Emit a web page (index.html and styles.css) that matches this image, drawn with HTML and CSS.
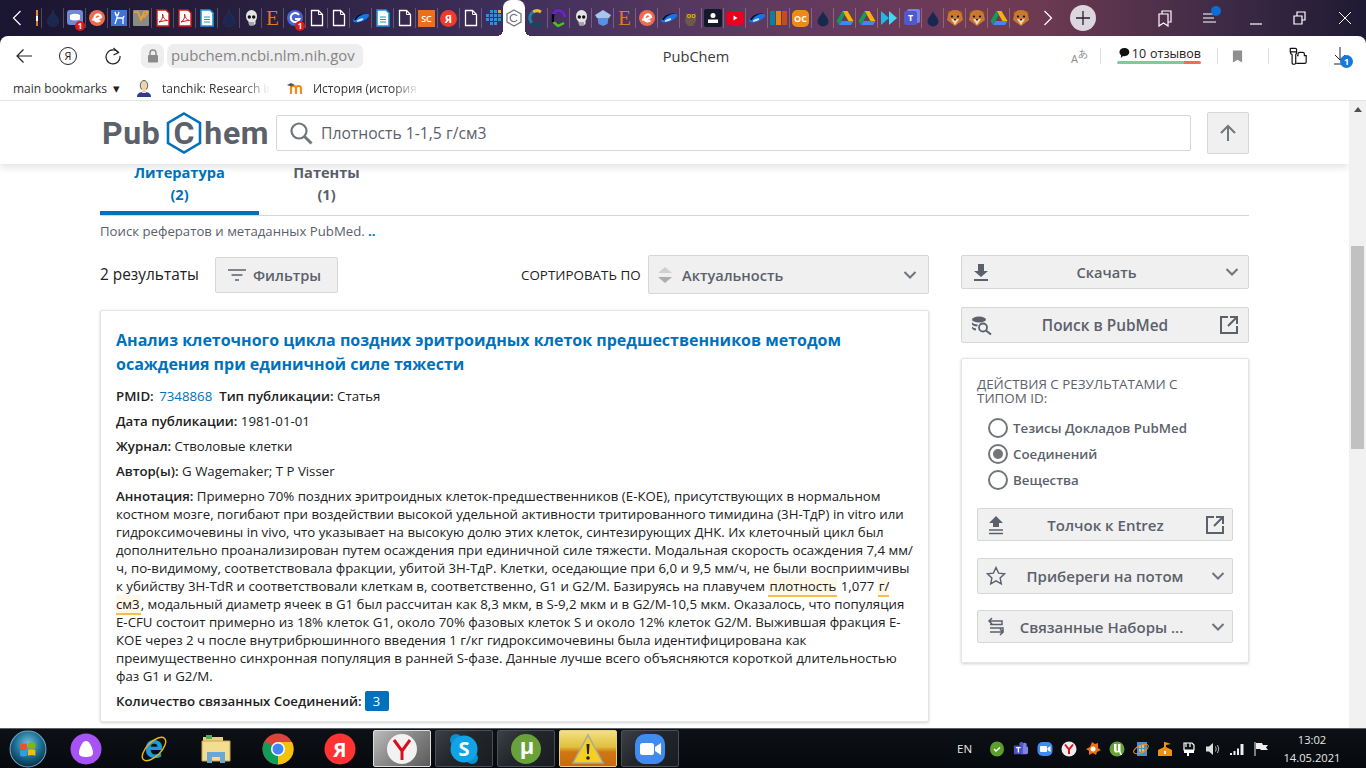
FILE: index.html
```html
<!DOCTYPE html>
<html lang="ru">
<head>
<meta charset="utf-8">
<title>PubChem</title>
<link rel="stylesheet" href="styles.css">
</head>
<body>
<svg class="defs" aria-hidden="true">
  <defs>
    <radialGradient id="orbg" cx="50%" cy="35%" r="65%"><stop offset="0" stop-color="#6fc0dc"/><stop offset=".55" stop-color="#1d6f96"/><stop offset="1" stop-color="#0b2c44"/></radialGradient>
  </defs>
  <symbol id="drop" viewBox="0 0 18 18"><path d="M9 1.500c.3 3-5.500 6.500-5.500 11a5.500 5 0 0 0 11 0c0-4.500-5.800-8-5.500-11z" fill="#1a2850" stroke="#2c4a80" stroke-width=".6" stroke-dasharray="1 1"/></symbol>
  <symbol id="discord" viewBox="0 0 18 18"><rect x="1" y="1" width="16" height="15" rx="3" fill="#6f88d8"/><path d="M4 6q5-2.500 10 0v4.500q-5 2-10 0z" fill="#fff"/></symbol>
  <symbol id="eicon" viewBox="0 0 18 18"><circle cx="9" cy="9" r="8" fill="#ee6b50"/><path d="M4 10.500q5 .5 9-2.500q-1-3-4-2.500q-3 1-2.500 5q1 3 6 1" fill="none" stroke="#fff" stroke-width="2.200"/></symbol>
  <symbol id="deer" viewBox="0 0 18 18"><rect x="1" y="1" width="16" height="16" fill="#3f74d9"/><path d="M5 3l1 3h2l1-3M7 6v3l-2 6M7 9h6v6M13 9l1-2" fill="none" stroke="#fff" stroke-width="1.300"/></symbol>
  <symbol id="vlogo" viewBox="0 0 18 18"><rect x="1" y="1" width="16" height="16" rx="1" fill="#8b8b85"/><path d="M2 3h4l3 8 3-8h4l-2 3h-3M9 8h5" fill="none" stroke="#f0a030" stroke-width="1.500"/></symbol>
  <symbol id="pdf" viewBox="0 0 18 18"><path d="M3 1h9l3 3v13H3z" fill="#fff" stroke="#d01818" stroke-width="1.400"/><path d="M5 13c3-1 4-5 3.500-8 1 4 2 6 5 6.500-3 0-6 1-8.500 1.500z" fill="none" stroke="#d01818"/></symbol>
  <symbol id="gdoc" viewBox="0 0 18 18"><path d="M3 1h9l3 3v13H3z" fill="#fff" stroke="#1a96d6" stroke-width="1.600"/><path d="M6 8h6M6 10.500h6M6 13h6" stroke="#1a96d6"/></symbol>
  <symbol id="skull" viewBox="0 0 18 18"><path d="M4 7a5.500 6 0 0 1 11 0c0 3-1 4-1.500 5v3l-2 1.500h-4l-1-2v-2c-1.500-1-2.500-3-2.500-5.500z" fill="#e4e4e4"/><circle cx="7.300" cy="8" r="1.700" fill="#111"/><circle cx="11.700" cy="8" r="1.700" fill="#111"/><path d="M7 13v3M9 13v3M11 13v3" stroke="#333" stroke-width=".7"/></symbol>
  <symbol id="gicon" viewBox="0 0 18 18"><circle cx="9" cy="9" r="8" fill="#4a63d8"/><path d="M13 6a4.500 4.500 0 1 0 .5 4H9" fill="none" stroke="#fff" stroke-width="2"/></symbol>
  <symbol id="file" viewBox="0 0 18 18"><path d="M3.500 1.500h7l4 4v11h-11z" fill="none" stroke="#fff" stroke-width="1.300"/><path d="M10.500 1.500v4h4" fill="none" stroke="#fff"/></symbol>
  <symbol id="saucer" viewBox="0 0 18 18"><ellipse cx="9" cy="9" rx="8.500" ry="3.500" transform="rotate(-22 9 9)" fill="#1474e8"/><path d="M2 11c2-5 8-7 14-7-5 1-10 3-12 7z" fill="#0a0a12"/><ellipse cx="8" cy="11" rx="3.500" ry="1.200" transform="rotate(-22 8 11)" fill="#cfe6ff"/></symbol>
  <symbol id="cubes" viewBox="0 0 18 18"><g fill="#2f8fd8"><rect x="6" y="1" width="3" height="3"/><rect x="10" y="1" width="3" height="3"/><rect x="2" y="5" width="3" height="3"/><rect x="6" y="5" width="3" height="3"/><rect x="10" y="5" width="3" height="3"/><rect x="14" y="5" width="3" height="3"/><rect x="2" y="9" width="3" height="3"/><rect x="6" y="9" width="3" height="3"/><rect x="10" y="9" width="3" height="3"/><rect x="14" y="9" width="3" height="3"/><rect x="6" y="13" width="3" height="3"/><rect x="10" y="13" width="3" height="3"/></g><rect x="14" y="1" width="3" height="3" fill="#e8b020"/></symbol>
  <symbol id="cactive" viewBox="0 0 18 18"><path d="M9 1l7 4v8l-7 4-7-4V5z" fill="none" stroke="#77797e" stroke-width="1.300"/><path d="M12 7a3.700 3.700 0 1 0 0 4" fill="none" stroke="#77797e" stroke-width="1.300"/></symbol>
  <symbol id="crainbow" viewBox="0 0 18 18"><path d="M14 3a7 7 0 0 0-8 0" fill="none" stroke="#e0c030" stroke-width="3"/><path d="M6 3a7 7 0 0 0-1 11" fill="none" stroke="#1b7fa8" stroke-width="3"/><path d="M5 14a7 7 0 0 0 9 1" fill="none" stroke="#0c4a60" stroke-width="3"/></symbol>
  <symbol id="clar" viewBox="0 0 18 18"><path d="M13 3L7 1 3 5l.5 8" fill="none" stroke="#7020d8" stroke-width="2.500"/><path d="M3.500 13L8 17l6-3" fill="none" stroke="#50c020" stroke-width="2.500"/><path d="M3 5v8" stroke="#000" stroke-width="2.500"/><path d="M13 3l2 5" stroke="#7020d8" stroke-width="2.500"/></symbol>
  <symbol id="shield" viewBox="0 0 18 18"><path d="M9 1l8 5-2 3H3L1 6z" fill="#a6c6f0"/><path d="M3.500 9h11l-1 6-4.500 2-4.500-2z" fill="#5b8fe0"/></symbol>
  <symbol id="owl" viewBox="0 0 18 18"><path d="M4 4l2 1h6l2-1v8l-3 5H6l-3-4z" fill="#6b5a4a"/><circle cx="7" cy="7" r="2" fill="#e8b020"/><circle cx="11.500" cy="7" r="2" fill="#e8b020"/><circle cx="7" cy="7" r=".8" fill="#111"/><circle cx="11.500" cy="7" r=".8" fill="#111"/></symbol>
  <symbol id="prof" viewBox="0 0 18 18"><rect width="18" height="18" rx="2" fill="#13182a"/><circle cx="9" cy="6.500" r="2.500" fill="#fff"/><rect x="4" y="10.500" width="10" height="3.500" fill="#fff"/></symbol>
  <symbol id="yt" viewBox="0 0 18 18"><rect y="2" width="18" height="14" rx="3" fill="#e8001c"/><path d="M7.500 6.500v5l4-2.500z" fill="#fff"/></symbol>
  <symbol id="bars" viewBox="0 0 18 18"><rect y="2" width="5" height="14" fill="#0a7f9e"/><rect x="6" y="2" width="5" height="14" fill="#e8820a"/><rect x="12" y="2" width="5" height="14" fill="#c84a20"/></symbol>
  <symbol id="drive" viewBox="0 0 18 18"><path d="M6.500 2h5l6 10H12.500z" fill="#f4b400"/><path d="M6.500 2L0.500 12l2.500 4 6-10.500z" fill="#0f9d58"/><path d="M3 16h12l2.500-4H5.500z" fill="#4285f4"/></symbol>
  <symbol id="arrows" viewBox="0 0 18 18"><path d="M1 2l8 7-8 7z" fill="#20b8e8"/><path d="M9 2l8 7-8 7z" fill="#40d8f0"/></symbol>
  <symbol id="bear" viewBox="0 0 18 18"><circle cx="3.500" cy="4" r="2.500" fill="#8a4a20"/><circle cx="14.500" cy="4" r="2.500" fill="#8a4a20"/><path d="M2 6a7 5 0 0 1 14 0l1 5-8 6-8-6z" fill="#c87830"/><path d="M5 10h8l-4 6z" fill="#f2d8b0"/><circle cx="6" cy="7.500" r="1.100" fill="#111"/><circle cx="12" cy="7.500" r="1.100" fill="#111"/><path d="M7.500 10h3L9 12z" fill="#111"/></symbol>
  <symbol id="chev" viewBox="0 0 14 10"><path d="M1.500 2L7 7.500 12.500 2" fill="none" stroke="#6f747c" stroke-width="2"/></symbol>
  <symbol id="ext" viewBox="0 0 20 20"><path d="M9 2H2v16h16v-7M11 2h7v7M18 2l-9 9" fill="none" stroke="#5b616b" stroke-width="2"/></symbol>
</svg>

<div class="screen">
  <header class="chrome">
    <div class="strip">
      <div class="arrow-slot"><svg class="nav-arrow" viewBox="0 0 10 18"><path d="M8.500 2L1.500 9l7 7" fill="none" stroke="#fff" stroke-width="1.200"/></svg></div>
      <div class="part-slot"><span class="part-tab"></span></div>
      <div class="tab"><svg class="ic"><use href="#drop"/></svg></div>
      <div class="tab"><svg class="ic"><use href="#discord"/></svg><span class="tab-badge">1</span></div>
      <div class="tab"><svg class="ic"><use href="#eicon"/></svg></div>
      <div class="tab"><svg class="ic"><use href="#deer"/></svg></div>
      <div class="tab"><svg class="ic"><use href="#vlogo"/></svg></div>
      <div class="tab"><svg class="ic"><use href="#pdf"/></svg></div>
      <div class="tab"><svg class="ic"><use href="#pdf"/></svg></div>
      <div class="tab"><svg class="ic"><use href="#gdoc"/></svg></div>
      <div class="tab"><svg class="ic"><use href="#drop"/></svg></div>
      <div class="tab"><svg class="ic"><use href="#skull"/></svg></div>
      <div class="tab"><span class="fav-e">E</span></div>
      <div class="tab"><svg class="ic"><use href="#gicon"/></svg><span class="tab-badge">1</span></div>
      <div class="tab"><svg class="ic"><use href="#file"/></svg></div>
      <div class="tab"><svg class="ic"><use href="#file"/></svg></div>
      <div class="tab"><svg class="ic"><use href="#saucer"/></svg></div>
      <div class="tab"><svg class="ic"><use href="#gdoc"/></svg></div>
      <div class="tab"><svg class="ic"><use href="#file"/></svg></div>
      <div class="tab"><span class="fav-sc">SC</span></div>
      <div class="tab"><span class="fav-ya">Я</span></div>
      <div class="tab"><svg class="ic"><use href="#file"/></svg></div>
      <div class="tab"><svg class="ic"><use href="#cubes"/></svg></div>
      <div class="tab-active"><svg class="ic"><use href="#cactive"/></svg></div>
      <div class="tab tab-first"><svg class="ic"><use href="#crainbow"/></svg></div>
      <div class="tab"><svg class="ic"><use href="#clar"/></svg></div>
      <div class="tab"><svg class="ic"><use href="#skull"/></svg></div>
      <div class="tab"><svg class="ic"><use href="#shield"/></svg></div>
      <div class="tab"><span class="fav-e">E</span></div>
      <div class="tab"><svg class="ic"><use href="#eicon"/></svg></div>
      <div class="tab"><svg class="ic"><use href="#saucer"/></svg></div>
      <div class="tab"><svg class="ic"><use href="#owl"/></svg></div>
      <div class="tab"><svg class="ic"><use href="#prof"/></svg></div>
      <div class="tab"><svg class="ic"><use href="#yt"/></svg></div>
      <div class="tab"><svg class="ic"><use href="#saucer"/></svg></div>
      <div class="tab"><svg class="ic"><use href="#bars"/></svg></div>
      <div class="tab"><span class="fav-oc">OC</span></div>
      <div class="tab"><svg class="ic"><use href="#drop"/></svg></div>
      <div class="tab"><svg class="ic"><use href="#drive"/></svg></div>
      <div class="tab"><svg class="ic"><use href="#drive"/></svg></div>
      <div class="tab"><svg class="ic"><use href="#arrows"/></svg></div>
      <div class="tab"><span class="fav-teams">T</span></div>
      <div class="tab"><svg class="ic"><use href="#drop"/></svg></div>
      <div class="tab"><svg class="ic"><use href="#bear"/></svg></div>
      <div class="tab"><svg class="ic"><use href="#bear"/></svg></div>
      <div class="tab"><svg class="ic"><use href="#drive"/></svg></div>
      <div class="tab"><svg class="ic"><use href="#bear"/></svg></div>
      <div class="more-slot"><svg class="nav-arrow" viewBox="0 0 10 18"><path d="M1.500 2l7 7-7 7" fill="none" stroke="#fff" stroke-width="1.200"/></svg></div>
      <div class="plus"><svg viewBox="0 0 14 14" class="plus-ic"><path d="M7 0v14M0 7h14" stroke="#222" stroke-width="1.300"/></svg></div>
      <div class="win-ctl">
        <svg class="wc wc-coll" viewBox="0 0 18 18"><path d="M3 5h9v12l-4.500-3L3 17z M6 5V2h9v11h-3" fill="none" stroke="#fff" stroke-width="1.200"/></svg>
        <span class="wc-menu"><svg class="wc" viewBox="0 0 18 18"><path d="M0 5h11M0 9h11M0 13h13" stroke="#fff" stroke-width="1.200"/></svg><span class="wc-dot"></span></span>
        <svg class="wc wc-min" viewBox="0 0 18 18"><path d="M3 15h12" stroke="#fff" stroke-width="1.200"/></svg>
        <svg class="wc wc-max" viewBox="0 0 18 18"><path d="M3 7h8v8H3z M6 7V3h8v8h-3" fill="none" stroke="#fff" stroke-width="1.200"/></svg>
        <svg class="wc wc-close" viewBox="0 0 18 18"><path d="M3 3l12 12M15 3L3 15" stroke="#fff" stroke-width="1"/></svg>
      </div>
    </div>
    <div class="toolbar">
      <div class="tb-left">
        <svg class="tb-back" viewBox="0 0 18 16"><path d="M17 8H2M8.500 1.500L2 8l6.500 6.500" fill="none" stroke="#222" stroke-width="1.200"/></svg>
        <span class="tb-ya">Я</span>
        <svg class="tb-reload" viewBox="0 0 18 18"><path d="M14.500 5.500A7 7 0 1 0 16 9" fill="none" stroke="#222" stroke-width="1.200"/><path d="M9.500 1l5 4.500-5 2.500" fill="none" stroke="#222" stroke-width="1.200"/></svg>
        <span class="lock-pill"><svg class="lock" viewBox="0 0 12 14"><path d="M3 6V4a3 3 0 0 1 6 0v2" fill="none" stroke="#8a8a8a" stroke-width="1.400"/><rect x="1" y="6" width="10" height="7.500" rx="1" fill="#8a8a8a"/></svg></span>
        <span class="url-pill">pubchem.ncbi.nlm.nih.gov</span>
      </div>
      <div class="tb-title">PubChem</div>
      <div class="tb-right">
        <span class="translate">A<span class="translate-jp">あ</span></span>
        <span class="tb-sep tb-sep-a"></span>
        <div class="reviews">
          <div class="rev-text"><svg class="rev-ic" viewBox="0 0 12 12"><path d="M6 .5c3 0 5.500 1.800 5.500 4.500S9 9.500 6 9.500c-.6 0-1 0-1.500-.2L2 11.500l.3-3C1 7.500.5 6.300.5 5 .5 2.300 3 .5 6 .5z" fill="#111"/></svg>10 <span class="rev-small">отзывов</span></div>
          <div class="rev-bar"><span class="rev-good"></span><span class="rev-bad"></span></div>
        </div>
        <span class="tb-sep tb-sep-b"></span>
        <svg class="tb-mark" viewBox="0 0 12 14"><path d="M1 1h10v13L6 11 1 14z" fill="#8f8f8f"/></svg>
        <span class="tb-sep tb-sep-c"></span>
        <svg class="tb-prot" viewBox="0 0 22 20"><path d="M3 1h5q1.500 0 1.500 1.500V5q0 1.500-1 3v9q0 1.500-1.500 1.500h-1Q4.500 18.500 4.500 17V8q-2-1.500-2-3V2Q2 1 3 1zM2.500 5h7" fill="none" stroke="#111" stroke-width="1.300"/><path d="M10 9h1V7q0-1.500 2-1.500h3q2 0 2 1.500v2h2v7q0 1.500-1.500 1.500H9" fill="none" stroke="#111" stroke-width="1.300"/></svg>
        <span class="tb-dl"><svg class="tb-dl-ic" viewBox="0 0 14 18"><path d="M6 0v13M1 8l5 5 5-5M0 17h11" fill="none" stroke="#222" stroke-width="1"/></svg><span class="tb-dl-badge">1</span></span>
      </div>
    </div>
    <div class="bookmarks">
      <span class="bm bm-main">main bookmarks <span class="bm-caret">▾</span></span>
      <svg class="bm-ava" viewBox="0 0 16 18"><path d="M1 18c0-4 3-5 7-5s7 1 7 5z" fill="#2c3a90"/><ellipse cx="8" cy="6.500" rx="3.700" ry="5" fill="#f0d4b0" stroke="#333" stroke-width=".8"/><rect x="6" y="10" width="4" height="4" fill="#f0d4b0"/></svg>
      <span class="bm bm-fade bm-one">tanchik: Research in</span>
      <svg class="bm-moodle" viewBox="0 0 18 14"><path d="M4 13V7q0-2 2.500-2T9 7v6M9 7q0-2 2.500-2T14 7v6" fill="none" stroke="#f58a1f" stroke-width="2.200"/><path d="M0 4l4-2 4 2-4 1.500z" fill="#555"/></svg>
      <span class="bm bm-fade bm-two">История (история</span>
    </div>
  </header>

  <div class="page">
    <div class="view">
      <div class="site-head">
        <div class="logo">Pub<span class="logo-c"><svg class="hex" viewBox="0 0 36 42"><path d="M18 1.500l16 9.500v20l-16 9.500-16-9.500V11z" fill="none" stroke="#0071bc" stroke-width="2.600"/></svg><span class="logo-cl">C</span></span>hem</div>
        <div class="search">
          <svg class="search-ic" viewBox="0 0 24 24"><circle cx="10" cy="10" r="7.500" fill="none" stroke="#71767a" stroke-width="2.200"/><path d="M15.500 15.500l7 7" stroke="#71767a" stroke-width="3"/></svg>
          <span>Плотность 1-1,5 г/см3</span>
        </div>
        <div class="up-btn"><svg class="up-ic" viewBox="0 0 18 18"><path d="M9 17V2M2 9l7-7 7 7" fill="none" stroke="#71767a" stroke-width="2"/></svg></div>
      </div>

      <div class="content">
        <nav class="tabs">
          <div class="t-item t-on">Литература<br>(2)</div>
          <div class="t-item">Патенты<br>(1)</div>
        </nav>
        <p class="desc">Поиск рефератов и метаданных PubMed. <span class="desc-more">..</span></p>

        <div class="columns">
          <main class="col-main">
            <div class="res-bar">
              <span class="res-count">2 результаты</span>
              <div class="btn btn-filter">
                <svg class="filter-ic" viewBox="0 0 18 12"><path d="M0 1h18M3.500 6h11M7 11h4" stroke="#5b616b" stroke-width="1.500"/></svg>
                Фильтры
              </div>
              <span class="sort-label">СОРТИРОВАТЬ ПО</span>
              <div class="select">
                <svg class="sort-ic" viewBox="0 0 14 16"><path d="M7 0l7 6H0z" fill="#d0d0d0"/><path d="M7 16L0 10h14z" fill="#a9aeb1"/></svg>
                <span class="select-text">Актуальность</span>
                <svg class="chev"><use href="#chev"/></svg>
              </div>
            </div>

            <article class="card">
              <h2 class="card-title">Анализ клеточного цикла поздних эритроидных клеток предшественников методом осаждения при единичной силе тяжести</h2>
              <p class="meta"><b>PMID:</b> <a class="link">7348868</a> &nbsp;<b>Тип публикации:</b> Статья</p>
              <p class="meta"><b>Дата публикации:</b> 1981-01-01</p>
              <p class="meta"><b>Журнал:</b> Стволовые клетки</p>
              <p class="meta"><b>Автор(ы):</b> G Wagemaker; T P Visser</p>
              <p class="abstract"><b>Аннотация:</b> Примерно 70% поздних эритроидных клеток-предшественников (E-КОЕ), присутствующих в нормальном костном мозге, погибают при воздействии высокой удельной активности тритированного тимидина (3H-ТдР) in vitro или гидроксимочевины in vivo, что указывает на высокую долю этих клеток, синтезирующих ДНК. Их клеточный цикл был дополнительно проанализирован путем осаждения при единичной силе тяжести. Модальная скорость осаждения 7,4 мм/ч, по-видимому, соответствовала фракции, убитой 3H-ТдР. Клетки, оседающие при 6,0 и 9,5 мм/ч, не были восприимчивы к убийству 3H-TdR и соответствовали клеткам в, соответственно, G1 и G2/М. Базируясь на плавучем <mark class="hl">плотность</mark> 1,077 <mark class="hl">г/см3</mark>, модальный диаметр ячеек в G1 был рассчитан как 8,3 мкм, в S-9,2 мкм и в G2/M-10,5 мкм. Оказалось, что популяция E-CFU состоит примерно из 18% клеток G1, около 70% фазовых клеток S и около 12% клеток G2/M. Выжившая фракция E-КОЕ через 2 ч после внутрибрюшинного введения 1 г/кг гидроксимочевины была идентифицирована как преимущественно синхронная популяция в ранней S-фазе. Данные лучше всего объясняются короткой длительностью фаз G1 и G2/M.</p>
              <p class="count"><b>Количество связанных Соединений:</b> <span class="count-badge">3</span></p>
            </article>
          </main>

          <aside class="col-side">
            <div class="btn btn-side btn-dl">
              <svg class="side-ic" viewBox="0 0 20 20"><path d="M7 2h6v7h4l-7 6-7-6h4z" fill="#5b616b"/><path d="M3 18h14" stroke="#5b616b" stroke-width="2"/></svg>
              <span class="btn-text">Скачать</span>
              <svg class="chev"><use href="#chev"/></svg>
            </div>
            <div class="btn btn-side btn-pm">
              <svg class="side-ic" viewBox="0 0 22 20"><ellipse cx="8" cy="4" rx="7" ry="3" fill="#5b616b"/><path d="M1 6c0 2 3 3 6 3l-1 2c-2 0-4-1-5-2zM1 11c1 1 3 2 4 2v2c-2 0-3-1-4-2z" fill="#5b616b"/><circle cx="12" cy="12" r="4" fill="none" stroke="#5b616b" stroke-width="1.800"/><path d="M15 15l5 4" stroke="#5b616b" stroke-width="2"/></svg>
              <span class="btn-text">Поиск в PubMed</span>
              <svg class="ext"><use href="#ext"/></svg>
            </div>
            <section class="actions">
              <h3 class="act-title">ДЕЙСТВИЯ С РЕЗУЛЬТАТАМИ С ТИПОМ ID:</h3>
              <div class="radio"><span class="rad"></span>Тезисы Докладов PubMed</div>
              <div class="radio"><span class="rad rad-on"></span>Соединений</div>
              <div class="radio"><span class="rad"></span>Вещества</div>
              <div class="btn btn-act btn-push">
                <svg class="side-ic" viewBox="0 0 20 20"><path d="M10 1l7 7h-4v4H7V8H3z" fill="#5b616b"/><path d="M3 15h14M3 18.500h14" stroke="#5b616b" stroke-width="1.600"/></svg>
                <span class="btn-text">Толчок к Entrez</span>
                <svg class="ext"><use href="#ext"/></svg>
              </div>
              <div class="btn btn-act btn-save">
                <svg class="side-ic" viewBox="0 0 20 20"><path d="M10 1.500l2.600 5.600 6 .7-4.500 4.100 1.200 6-5.300-3-5.300 3 1.200-6L1.400 7.800l6-.7z" fill="none" stroke="#5b616b" stroke-width="1.400"/></svg>
                <span class="btn-text">Прибереги на потом</span>
                <svg class="chev"><use href="#chev"/></svg>
              </div>
              <div class="btn btn-act btn-sets">
                <svg class="side-ic" viewBox="0 0 20 20"><path d="M6 1L3 4l3 3M3 4h13v3.500H4M4 11h13v4H4M14 12l3 3-3 3" fill="none" stroke="#5b616b" stroke-width="1.500"/></svg>
                <span class="btn-text">Связанные Наборы ...</span>
                <svg class="chev"><use href="#chev"/></svg>
              </div>
            </section>
          </aside>
        </div>
      </div>
    </div>
    <div class="scrollbar">
      <svg class="sb-up" viewBox="0 0 8 5"><path d="M4 0l4 5H0z" fill="#505050"/></svg>
      <div class="sb-thumb"></div>
    </div>
  </div>

  <footer class="taskbar">
    <div class="start"><svg class="orb" viewBox="0 0 36 36"><circle cx="18" cy="18" r="17" fill="url(#orbg)" stroke="#6fa6c0"/><path d="M10.500 12.500q3 1.500 6.500 0v5.500q-3.500 1.500-6.500 0z" fill="#f25022"/><path d="M18 12.500q3.500-1.500 7 0V18q-3.500-1.500-7 0z" fill="#7fba00"/><path d="M10.500 19q3 1.500 6.500 0v5.500q-3.500 1.500-6.500 0z" fill="#2f9fe0"/><path d="M18 19q3.500-1.500 7 0v5.500q-3.500-1.500-7 0z" fill="#ffb900"/></svg></div>
    <div class="task task-alice"><svg class="task-ic" viewBox="0 0 32 32"><ellipse cx="16" cy="16" rx="15.500" ry="15.500" fill="#a652f5"/><path d="M16 8c4 0 7 8 7 12 0 3-3 4-7 4s-7-1-7-4c0-4 3-12 7-12z" fill="#fff"/></svg></div>
    <div class="task"><svg class="task-ic" viewBox="0 0 32 32"><text x="16" y="25" text-anchor="middle" class="svg-ie" fill="#1d9ad8">e</text><ellipse cx="16" cy="16" rx="15" ry="7" transform="rotate(-45 16 16)" fill="none" stroke="#e8b810" stroke-width="1.400"/></svg></div>
    <div class="task"><svg class="task-ic" viewBox="0 0 32 32"><rect x="3" y="4" width="20" height="8" fill="#e8d080"/><rect x="6" y="2" width="6" height="4" fill="#4caf50"/><path d="M2 8h28v20H2z" fill="#f2dd90" stroke="#c8a850"/><path d="M7 30V19h18v11h-5v-6h-8v6z" fill="#6ba8d0"/></svg></div>
    <div class="task"><svg class="task-ic" viewBox="0 0 32 32"><circle cx="16" cy="16" r="15.500" fill="#db4437"/><path d="M16 16L2.500 8.500A15.500 15.500 0 0 0 16 31.500z" fill="#0f9d58"/><path d="M16 9h14a15.500 15.500 0 0 1-14 22.500L16 16z" fill="#f4c20d"/><circle cx="16" cy="16" r="7" fill="#fff"/><circle cx="16" cy="16" r="5.500" fill="#4285f4"/></svg></div>
    <div class="task"><svg class="task-ic" viewBox="0 0 32 32"><circle cx="16" cy="16" r="15.500" fill="#f33"/><text x="16" y="24" text-anchor="middle" class="svg-ya" fill="#fff">Я</text></svg></div>
    <div class="task task-box task-lit"><svg class="task-ic" viewBox="0 0 32 32"><circle cx="16" cy="16" r="15" fill="#f2f2f2"/><path d="M8 7l8 11 8-11M16 18v9" fill="none" stroke="#d8101c" stroke-width="3"/></svg></div>
    <div class="task task-box"><svg class="task-ic" viewBox="0 0 32 32"><circle cx="8" cy="7" r="6" fill="#0a8fd0"/><circle cx="24" cy="25" r="6" fill="#0a8fd0"/><circle cx="16" cy="16" r="13.500" fill="#10a4e6"/><text x="16" y="23" text-anchor="middle" class="svg-ya" fill="#fff">S</text></svg></div>
    <div class="task task-box"><svg class="task-ic" viewBox="0 0 32 32"><circle cx="16" cy="16" r="15" fill="#6aa23a"/><text x="17" y="21" text-anchor="middle" class="svg-mu" fill="#fff">µ</text></svg></div>
    <div class="task task-box task-warn"><svg class="task-ic" viewBox="0 0 32 32"><path d="M16 2l15 28H1z" fill="#f5d020" stroke="#a8a8a8" stroke-width="1.500"/><path d="M14.500 11h3l-.6 10h-1.800z" fill="#222"/><circle cx="16" cy="25" r="1.800" fill="#222"/></svg></div>
    <div class="task task-box"><svg class="task-ic" viewBox="0 0 32 32"><rect x="1" y="1" width="30" height="30" rx="10" fill="#3f8bf0"/><rect x="6" y="10" width="14" height="12" rx="2.500" fill="#fff"/><path d="M21 14l6-4v12l-6-4z" fill="#fff"/></svg></div>
    <div class="tray">
      <span class="lang">EN</span>
      <svg class="tr" viewBox="0 0 16 16"><path d="M8 .5q3 0 5 2 2 2.500 2 5.500 0 4-2 5.500-2 2-5 2t-5-2Q1 12 1 8q0-3 2-5.500 2-2 5-2z" fill="#5aa02a"/><path d="M5 8l2 2 4-3.500" fill="none" stroke="#fff" stroke-width="1.500"/></svg>
      <svg class="tr" viewBox="0 0 18 18"><circle cx="13" cy="4.500" r="2.500" fill="#7b83eb"/><rect x="8" y="6" width="9" height="9" rx="2" fill="#7b83eb"/><circle cx="9.500" cy="3.500" r="2.500" fill="#5059c9"/><rect x="1" y="5" width="10" height="10" rx="1" fill="#4b53bc"/><path d="M3.500 7.500h5M6 7.500V13" stroke="#fff" stroke-width="1.400"/></svg>
      <svg class="tr" viewBox="0 0 16 16"><rect x=".5" y="1" width="15" height="14" rx="5" fill="#3f8bf0"/><rect x="3" y="5" width="7" height="6" rx="1" fill="#fff"/><path d="M10.500 7l3-2v6l-3-2z" fill="#fff"/></svg>
      <svg class="tr" viewBox="0 0 16 16"><circle cx="8" cy="8" r="7.500" fill="#eee"/><path d="M4 3.500l4 5 4-5M8 8.500V13" fill="none" stroke="#d8101c" stroke-width="2"/></svg>
      <svg class="tr" viewBox="0 0 16 16"><path d="M1 8l4-2 2-5 3 2 3-1v5l3 2-4 2-1 3-3-2-4 2v-4z" fill="#f07010"/><circle cx="8" cy="8" r="2.500" fill="#fff"/></svg>
      <svg class="tr" viewBox="0 0 16 16"><circle cx="8" cy="8" r="7.500" fill="#6aa23a"/><path d="M5 3v6q0 3 3.500 2.500L10 11l1.500 3H13l-1.500-4V3H9v7q-1.500.5-1.500-1.500V3z" fill="#fff"/></svg>
      <svg class="tr" viewBox="0 0 16 16"><rect x="4" y="1" width="10" height="14" fill="#4a90d0"/><path d="M6 5l2-1v3H6zM9 4l2-.5V7H9zM6 8h2v3l-2-.5zM9 8h2v3.500L9 11z" fill="#f0c040"/><ellipse cx="8" cy="8" rx="8" ry="3.500" transform="rotate(-25 8 8)" fill="none" stroke="#f09020"/></svg>
      <svg class="tr" viewBox="0 0 16 16"><path d="M1 9l6-3V1h1l6 2-5 1v2l6 3v6H1z" fill="#f09010"/><rect x="7" y="10" width="2" height="3" fill="#fff"/></svg>
      <svg class="tr" viewBox="0 0 16 16"><path d="M3 2h8l2 2v5H3zM5 2v4M9 2v4" fill="#111" stroke="#fff" stroke-width="1.200"/><path d="M3 9h10v3H8v3H6v-3H3z" fill="#fff"/></svg>
      <svg class="tr" viewBox="0 0 16 16"><path d="M1 5.500h3L8 2v12L4 10.500H1z" fill="#ddd"/><path d="M10.500 5.500q1.500 2.500 0 5M12.500 4q2.500 4 0 8" fill="none" stroke="#bbb"/></svg>
      <svg class="tr" viewBox="0 0 16 16"><path d="M1 12h2v2H1zM4.500 10h2v4h-2zM8 7.500h2V14H8zM11.500 3h3v11h-3z" fill="#eee"/></svg>
      <svg class="tr" viewBox="0 0 16 16"><path d="M2 1v14" stroke="#eee"/><path d="M3 2h6l1 2h5l-2 2.500 2 2.500H8L7 8H3z" fill="#eee"/></svg>
      <div class="clock"><div>13:02</div><div>14.05.2021</div></div>
      <div class="show-desk"></div>
    </div>
  </footer>
</div>
</body>
</html>
```

FILE: styles.css
```css
* { box-sizing: border-box; }
html, body { margin: 0; padding: 0; }
body {
  width: 1366px;
  height: 768px;
  overflow: hidden;
  font-family: "Open Sans", "Noto Sans", sans-serif;
  background: #fff;
}
.defs { width: 0; height: 0; display: block; overflow: hidden; }
.svg-ya { font: 700 20px "Open Sans", sans-serif; }
.svg-ie { font: 700 32px "Open Sans", sans-serif; }
.svg-mu { font: 700 22px "Open Sans", sans-serif; }

.screen { width: 1366px; height: 768px; display: flex; flex-direction: column; overflow: hidden; }

/* Browser chrome */
.chrome {
  height: 101px;
  flex: none;
  background: linear-gradient(90deg, #1a1530 0, #2a2040 20%, #40305c 38%, #5e3a60 55%, #703a55 72%, #6d3a52 76%, #3d2a45 90%, #1e1a33 100%);
}
.strip { height: 36px; display: flex; align-items: center; }
.arrow-slot { width: 30px; height: 36px; padding-left: 12px; display: flex; align-items: center; }
.nav-arrow { width: 10px; height: 18px; }
.part-slot { width: 11px; display: flex; padding-left: 6px; }
.part-tab { width: 2px; height: 16px; background: linear-gradient(#f08a20 0, #f08a20 40%, #fff 40%, #fff 70%, #d87a20 70%); }
.tab {
  width: 22px;
  height: 20px;
  border-left: 1px solid rgba(255, 255, 255, .22);
  display: flex;
  align-items: center;
  justify-content: center;
  position: relative;
}
.tab-first { border-left: 0; }
.ic { width: 18px; height: 18px; display: block; }
.fav-e { font: 21px/20px "Liberation Serif", serif; color: #e07a20; }
.fav-sc { width: 17px; height: 17px; background: #e8701e; color: #fff; font: 600 9px/17px "Open Sans", sans-serif; text-align: center; }
.fav-ya { width: 17px; height: 17px; border-radius: 50%; background: #f23a2b; color: #fff; font: 700 11px/17px "Open Sans", sans-serif; text-align: center; }
.fav-oc { width: 17px; height: 17px; border-radius: 5px; background: #f08a10; color: #fff; font: 700 9px/17px "Open Sans", sans-serif; text-align: center; }
.fav-teams { width: 13px; height: 14px; border-radius: 2px; background: #5059c9; box-shadow: 3px -2px 0 #7b83eb; color: #fff; font: 700 9px/14px "Open Sans", sans-serif; text-align: center; }
.tab-badge {
  position: absolute;
  right: 0;
  bottom: -3px;
  width: 10px;
  height: 10px;
  border-radius: 50%;
  background: #e01818;
  color: #fff;
  font: 700 8px/10px "Open Sans", sans-serif;
  text-align: center;
}
.tab-active {
  width: 22px;
  height: 36px;
  background: #fff;
  border-radius: 8px 8px 0 0;
  display: flex;
  align-items: center;
  justify-content: center;
  position: relative;
}
.tab-active::before, .tab-active::after {
  content: "";
  position: absolute;
  bottom: 0;
  width: 6px;
  height: 6px;
}
.tab-active::before { left: -6px; background: radial-gradient(circle at 0 0, transparent 6px, #fff 6px); }
.tab-active::after { right: -6px; background: radial-gradient(circle at 100% 0, transparent 6px, #fff 6px); }
.more-slot { width: 36px; padding-left: 12px; display: flex; }
.plus { width: 26px; height: 26px; margin-left: 3px; border-radius: 50%; background: #ded6de; display: flex; align-items: center; justify-content: center; }
.plus-ic { width: 14px; height: 14px; }
.win-ctl { flex: 1; display: flex; align-items: center; padding-left: 60px; }
.wc { width: 18px; height: 18px; display: block; }
.wc-menu { margin-left: 29px; position: relative; display: block; }
.wc-dot { position: absolute; top: -3px; left: 8px; width: 10px; height: 10px; border-radius: 50%; background: #0a6ed8; }
.wc-min { margin-left: 26px; }
.wc-max { margin-left: 26px; }
.wc-close { margin-left: 27px; }

.toolbar {
  height: 36px;
  background: #fff;
  border-radius: 8px 8px 0 0;
  display: flex;
  align-items: center;
  color: #222;
  padding-top: 4px;
}
.tb-left { width: 640px; flex: none; display: flex; align-items: center; padding-left: 15px; }
.tb-back { width: 18px; height: 16px; }
.tb-ya { width: 18px; height: 18px; margin-left: 26px; border: 1px solid #222; border-radius: 50%; font: 11px/16px "Open Sans", sans-serif; text-align: center; }
.tb-reload { width: 18px; height: 18px; margin-left: 27px; }
.lock-pill { width: 23px; height: 24px; margin-left: 19px; background: #eee; border-radius: 7px; display: flex; align-items: center; justify-content: center; }
.lock { width: 12px; height: 14px; }
.url-pill { width: 196px; height: 24px; margin-left: 3px; background: #eee; border-radius: 7px; color: #858585; font-size: 14.900px; line-height: 23px; padding-left: 4px; white-space: nowrap; }
.tb-title { width: 112px; flex: none; text-align: center; font-size: 14.600px; color: #3a3a3a; }
.tb-right { flex: 1; display: flex; align-items: center; }
.translate { margin-left: 319px; width: 18px; height: 20px; font-size: 11px; color: #8a8a8a; display: flex; align-items: flex-end; white-space: nowrap; }
.translate-jp { font-size: 10px; align-self: flex-start; }
.tb-sep { width: 1px; height: 16px; background: #ddd; display: block; }
.tb-sep-a { margin-left: 11px; }
.reviews { width: 84px; margin: 0 0 5px 16px; }
.rev-text { font-size: 12.500px; line-height: 15px; color: #222; white-space: nowrap; display: flex; align-items: flex-end; height: 18px; }
.rev-ic { width: 12px; height: 12px; margin: 0 2px 2px 2px; }
.rev-small { font-size: 12.500px; margin-left: 4px; }
.rev-bar { display: flex; height: 3px; border-radius: 2px; overflow: hidden; }
.rev-good { width: 67px; background: #82c99a; }
.rev-bad { width: 17px; background: #ee6b60; }
.tb-sep-b { margin-left: 16px; }
.tb-mark { width: 11px; height: 14px; margin-left: 14px; }
.tb-sep-c { margin-left: 25px; }
.tb-prot { width: 20px; height: 19px; margin-left: 19px; }
.tb-dl { margin-left: 26px; position: relative; display: block; width: 14px; height: 18px; }
.tb-dl-ic { width: 14px; height: 18px; display: block; }
.tb-dl-badge {
  position: absolute; left: 6px; top: 8px; width: 13px; height: 13px; border-radius: 50%;
  background: #1878d8; color: #fff; font: 700 9px/13px "Open Sans", sans-serif; text-align: center;
}

.bookmarks { height: 29px; background: #fff; display: flex; align-items: center; padding: 4px 0 0 13px; border-bottom: 1px solid #e4e4e4; }
.bm { font-size: 12px; color: #333; white-space: nowrap; }
.bm-main { width: 122px; }
.bm-caret { font-size: 13px; color: #222; margin-left: 3px; }
.bm-ava { width: 16px; height: 18px; margin-left: 1px; }
.bm-fade { overflow: hidden; -webkit-mask-image: linear-gradient(90deg, #000 75%, transparent); mask-image: linear-gradient(90deg, #000 75%, transparent); }
.bm-one { width: 108px; margin-left: 10px; }
.bm-moodle { width: 18px; height: 14px; margin-left: 17px; }
.bm-two { width: 106px; margin-left: 8px; }

/* Page */
.page { height: 627px; flex: none; display: flex; background: #fff; overflow: hidden; }
.view { width: 1349px; flex: none; overflow: hidden; }
.site-head {
  height: 63px;
  padding: 0 0 0 102px;
  display: flex;
  align-items: center;
  background: #fff;
  box-shadow: 0 3px 8px rgba(0, 0, 0, .12);
  position: relative;
  z-index: 1;
}
.logo { width: 174px; flex: none; display: flex; align-items: center; color: #5b616b; font: 700 32px/40px Roboto, "Open Sans", sans-serif; letter-spacing: .6px; white-space: nowrap; }
.logo-c { width: 36px; height: 42px; margin: 0 2px 0 6px; position: relative; display: flex; align-items: center; justify-content: center; }
.hex { position: absolute; inset: 0; width: 36px; height: 42px; }
.logo-cl { position: relative; }
.search {
  width: 915px;
  height: 36px;
  border: 1px solid #d6d7d9;
  border-radius: 2px;
  display: flex;
  align-items: center;
  padding-left: 12px;
  color: #5b616b;
  font-size: 15.700px;
  gap: 8px;
}
.search-ic { width: 24px; height: 24px; }
.up-btn { width: 42px; height: 42px; margin-left: 16px; background: #f0f0f0; border: 1px solid #d6d7d9; border-radius: 2px; display: flex; align-items: center; justify-content: center; }
.up-ic { width: 18px; height: 18px; }

.content { width: 1149px; margin-left: 100px; }
.tabs { height: 52px; display: flex; border-bottom: 1px solid #d6d7d9; }
.t-item { height: 54px; margin-top: -3px; color: #5b616b; font-size: 14.600px; font-weight: 700; line-height: 22px; text-align: center; width: 135px; }
.t-on { width: 159px; color: #0071bc; border-bottom: 4px solid #0071bc; }
.desc { margin: 8px 0 0; height: 31px; font-size: 13.200px; line-height: 15px; color: #5b616b; }
.desc-more { color: #0071bc; font-weight: 700; }

.columns { display: flex; gap: 32px; }
.col-main { width: 829px; flex: none; }
.col-side { width: 288px; flex: none; }
.res-bar { height: 39px; display: flex; align-items: center; }
.res-count { width: 115px; font-size: 15.400px; color: #212121; white-space: nowrap; }
.btn {
  background: #f0f0f0;
  border: 1px solid #d6d7d9;
  border-radius: 2px;
  color: #5b616b;
  font-size: 15px;
  font-weight: 600;
  display: flex;
  align-items: center;
}
.btn-filter { width: 123px; height: 36px; padding-left: 12px; gap: 7px; font-size: 14.600px; }
.filter-ic { width: 18px; height: 12px; }
.sort-label { margin-left: 183px; width: 127px; font-size: 13.400px; color: #212121; white-space: nowrap; }
.select {
  width: 281px;
  height: 39px;
  background: #f0f0f0;
  border: 1px solid #d6d7d9;
  border-radius: 2px;
  display: flex;
  align-items: center;
  padding: 0 11px 0 9px;
  color: #5b616b;
  font-size: 14.600px;
  font-weight: 600;
}
.sort-ic { width: 14px; height: 16px; }
.select-text { flex: 1; padding-left: 10px; }
.chev { width: 14px; height: 10px; flex: none; }

.card {
  margin-top: 16px;
  height: 412px;
  padding: 15px;
  border: 1px solid #e4e4e4;
  border-radius: 2px;
  box-shadow: 0 1px 3px rgba(0, 0, 0, .18);
  color: #212121;
  font-size: 13.250px;
}
.card-title { margin: 2px 0 0; font-size: 16px; line-height: 24px; font-weight: 700; color: #0071bc; }
.meta { margin: 0; line-height: 25px; height: 25px; }
.meta:first-of-type { margin-top: 8px; }
.meta b, .abstract b, .count b { font-weight: 600; }
.link { color: #0071bc; margin-left: 2px; }
.abstract { margin: 3px 0 0; line-height: 18px; }
.hl { background: #fff8e6; color: inherit; border-bottom: 2px solid #f2c14a; padding: 0 1px; }
.count { margin: 6px 0 0; line-height: 20px; display: flex; align-items: center; gap: 3px; }
.count-badge { width: 24px; height: 20px; background: #0071bc; color: #fff; text-align: center; border-radius: 2px; font-size: 13px; }

.btn-side { width: 288px; padding: 0 9px; }
.btn-dl { height: 34px; font-size: 14.600px; }
.btn-pm { height: 36px; margin-top: 18px; font-size: 15.400px; }
.btn-pm .side-ic { width: 22px; height: 21px; }
.btn-pm .btn-text { margin-right: 2px; }
.btn-text { flex: 1; text-align: center; white-space: nowrap; }
.side-ic { width: 20px; height: 20px; flex: none; }
.ext { width: 20px; height: 20px; flex: none; }
.btn-dl .chev, .btn-act .chev { margin: 0 0 0 3px; }
.actions {
  margin-top: 15px;
  height: 305px;
  padding: 18px 15px 0;
  border: 1px solid #e4e4e4;
  border-radius: 2px;
  box-shadow: 0 1px 3px rgba(0, 0, 0, .18);
}
.act-title { margin: 0 0 10px; padding-right: 30px; font-size: 13.400px; line-height: 14px; font-weight: 400; color: #5b616b; }
.radio { height: 26px; padding-left: 11px; display: flex; align-items: center; gap: 5px; color: #5b616b; font-size: 13.300px; font-weight: 600; white-space: nowrap; }
.rad { width: 20px; height: 20px; border: 2px solid #71767a; border-radius: 50%; background: #fff; display: flex; align-items: center; justify-content: center; }
.rad-on::after { content: ""; width: 10px; height: 10px; border-radius: 50%; background: #71767a; }
.btn-act { width: 256px; padding: 0 7px 0 8px; }
.btn-push { height: 33px; margin-top: 15px; }
.btn-save { height: 36px; margin-top: 17px; }
.btn-save .btn-text { margin-right: 4px; }
.btn-sets { height: 33px; margin-top: 16px; }
.btn-sets .btn-text { margin-right: 11px; }

.scrollbar { width: 17px; flex: none; background: #f1f1f1; padding: 6px 2px 0; }
.sb-up { width: 8px; height: 5px; display: block; margin: 0 auto; }
.sb-thumb { width: 13px; height: 203px; margin-top: 134px; background: #c1c1c1; }

/* Taskbar */
.taskbar {
  height: 40px;
  flex: none;
  background: linear-gradient(#0d1116, #06090d);
  border-top: 1px solid #5a6066;
  display: flex;
  align-items: center;
}
.start { width: 55px; flex: none; display: flex; justify-content: center; }
.orb { width: 38px; height: 38px; }
.task { width: 62px; height: 37px; flex: none; display: flex; align-items: center; justify-content: center; }
.task-alice { margin-right: 6px; }
.task-ic { width: 32px; height: 32px; }
.task-box {
  width: 58px;
  margin: 0 2px;
  border: 1px solid #4a4f55;
  border-radius: 2px;
  background: linear-gradient(135deg, #3c4045 0, #23272b 45%, #191d21 100%);
}
.task-lit { background: linear-gradient(135deg, #bcbcbc 0, #8a8a8a 45%, #5a5a5a 100%); border-color: #ddd; }
.task-warn { background: linear-gradient(#f4e080 0, #e0c040 45%, #d07810 60%, #c86a10 100%); border-color: #e8d080; }
.tray { flex: 1; display: flex; align-items: center; padding-left: 276px; color: #e8e8e8; }
.lang { width: 20px; font-size: 11.500px; margin-right: 12px; white-space: nowrap; }
.tr { width: 16px; height: 16px; margin-right: 8px; flex: none; }
.clock { width: 76px; margin-left: -3px; text-align: center; font-size: 11.200px; line-height: 18px; white-space: nowrap; }
.show-desk { width: 14px; height: 38px; margin-left: 17px; border: 1px solid #5a6066; background: linear-gradient(#3a4046, #14181c); }
```
